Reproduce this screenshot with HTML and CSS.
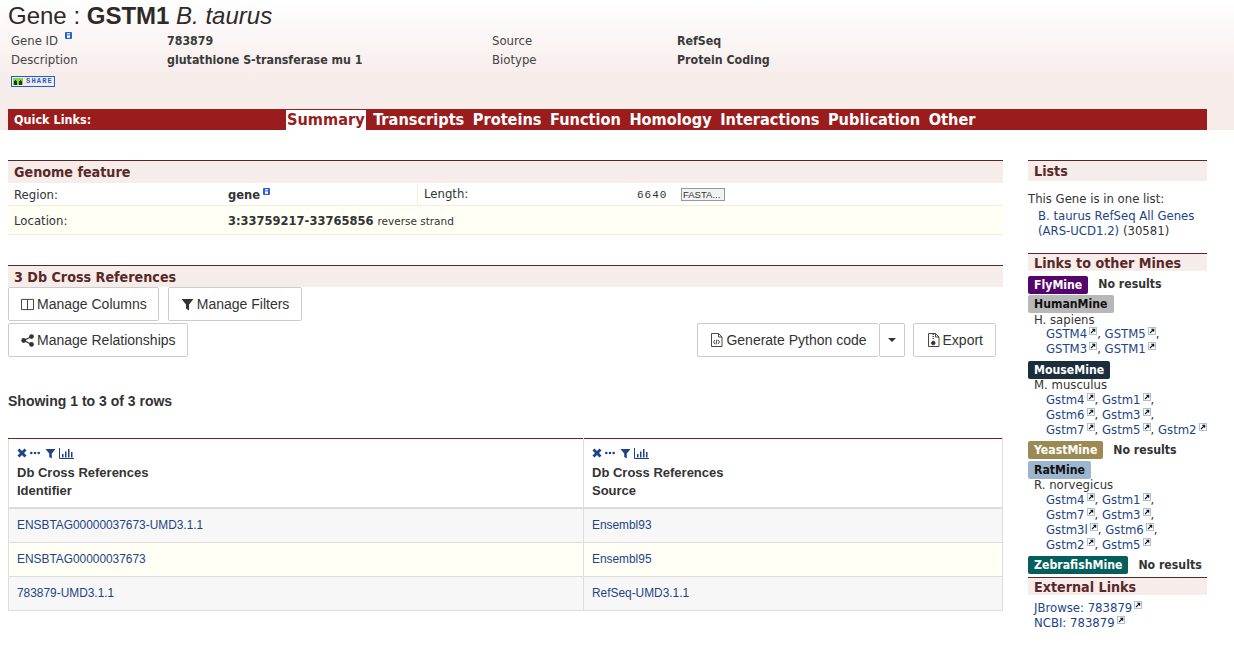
FILE: index.html
```html
<!DOCTYPE html>
<html lang="en">
<head>
  <meta charset="UTF-8">
  <title>Gene : GSTM1 B. taurus</title>
  <link rel="stylesheet" href="styles.css">
</head>
<body>

  <svg class="icon-defs" width="0" height="0">
    <symbol id="ext" viewBox="0 0 8 8">
      <rect x="0.5" y="0.5" width="7" height="7" fill="#fff" stroke="#a9c0d6"/>
      <path d="M2 6 5.200 2.800M3.200 2.300H5.700V4.800" fill="none" stroke="#111" stroke-width="1.100"/>
    </symbol>
    <symbol id="info" viewBox="0 0 7 7">
      <rect width="7" height="7" rx="1" fill="#2a62c9"/>
      <rect x="2" y="1.200" width="3" height="1.200" fill="#fff"/>
      <rect x="2" y="3.400" width="3" height="2.400" fill="#fff"/>
    </symbol>
    <symbol id="filter" viewBox="0 0 12 12">
      <path d="M0.500 1H11.500L7.400 6V11.500L4.600 9.800V6Z"/>
    </symbol>
  </svg>

  <header class="gene-header">
    <h1 class="gene-title">Gene : <b>GSTM1</b> <i>B. taurus</i></h1>
    <div class="gene-facts">
      <span class="fact-label">Gene ID <svg class="info-icon"><use href="#info"/></svg></span>
      <strong>783879</strong>
      <span class="fact-label">Source</span>
      <strong>RefSeq</strong>
      <span class="fact-label">Description</span>
      <strong>glutathione S-transferase mu 1</strong>
      <span class="fact-label">Biotype</span>
      <strong>Protein Coding</strong>
    </div>
    <div class="share-badge">
      <svg class="share-logo" viewBox="0 0 10 7"><rect width="10" height="7" fill="#86d936"/><path d="M1 7V3H2V2H3V3H4V7ZM6 7V3H7V2H8V3H9V7Z" fill="#1d3a1d"/></svg>
      <span>SHARE</span>
    </div>

    <nav class="quick-links">
      <span class="quick-title">Quick Links:</span>
      <div class="quick-menu">
        <a class="active">Summary</a>
        <a>Transcripts</a>
        <a>Proteins</a>
        <a>Function</a>
        <a>Homology</a>
        <a>Interactions</a>
        <a>Publication</a>
        <a>Other</a>
      </div>
    </nav>
  </header>

  <div class="page">
    <main class="main-col">
      <section class="feature">
        <h2 class="sec-title">Genome feature</h2>
        <div class="feature-row">
          <span class="feat-label">Region:</span>
          <span class="feat-value"><strong>gene</strong> <svg class="info-icon"><use href="#info"/></svg></span>
          <span class="feat-label feat-len">Length:</span>
          <span class="feat-num">6640</span>
          <span class="fasta-btn">FASTA...</span>
        </div>
        <div class="feature-row loc">
          <span class="feat-label">Location:</span>
          <span class="feat-value"><strong>3:33759217-33765856</strong> <small>reverse strand</small></span>
        </div>
      </section>

      <section class="refs">
        <h2 class="sec-title">3 Db Cross References</h2>
        <div class="toolbar">
          <button class="btn btn-left">
            <svg class="btn-icon" viewBox="0 0 14 14"><path d="M0.500 1.500H13.500V12.500H0.500ZM7 1.500V12.500" fill="none" stroke="#333"/></svg>
            Manage Columns
          </button>
          <button class="btn btn-left">
            <svg class="btn-icon" viewBox="0 0 12 12" fill="#333"><use href="#filter"/></svg>
            Manage Filters
          </button>
        </div>
        <div class="toolbar toolbar-2">
          <button class="btn btn-left">
            <svg class="btn-icon" viewBox="0 0 12 12" fill="#333"><path d="M2.500 6 9.500 2.500M2.500 6 9.500 9.500" stroke="#333" stroke-width="1.200"/><circle cx="2.500" cy="6" r="2.200"/><circle cx="9.700" cy="2.400" r="2.200"/><circle cx="9.700" cy="9.600" r="2.200"/></svg>
            Manage Relationships
          </button>
          <div class="toolbar-right">
            <div class="btn-group">
              <button class="btn">
                <svg class="btn-icon doc-icon" viewBox="0 0 12 14" fill="none" stroke="#333" stroke-width="0.900"><path d="M1 .5H8L11.500 4V13.500H1ZM8 .5V4H11.500"/><path d="M4.500 7 3 9 4.500 11M7.500 7 9 9 7.500 11M6.500 6.500 5.500 11.500"/></svg>
                Generate Python code
              </button>
              <button class="btn caret-btn"><span class="caret"></span></button>
            </div>
            <button class="btn btn-export">
              <svg class="btn-icon doc-icon" viewBox="0 0 12 14" fill="none" stroke="#333" stroke-width="0.900"><path d="M1 .5H8L11.500 4V13.500H1ZM8 .5V4H11.500"/><path d="M5 1.500H6.500M5 3.500H6.500M5 5.500H6.500"/><circle cx="5.800" cy="10" r="1.800" fill="#333"/></svg>
              Export
            </button>
          </div>
        </div>

        <p class="row-count">Showing 1 to 3 of 3 rows</p>

        <table class="ref-table">
          <thead>
            <tr>
              <th>
                <div class="col-tools">
                  <svg viewBox="0 0 10 10"><path d="M.5 2.500 2.500 .5 5 3 7.500 .5 9.500 2.500 7 5 9.500 7.500 7.500 9.500 5 7 2.500 9.500 .5 7.500 3 5Z"/></svg>
                  <svg viewBox="0 0 10 10"><circle cx="1.300" cy="5" r="1.300"/><circle cx="5" cy="5" r="1.300"/><circle cx="8.700" cy="5" r="1.300"/></svg>
                  <svg class="tool-filter" viewBox="0 0 12 12"><use href="#filter"/></svg>
                  <svg class="tool-wide" viewBox="0 0 15 11"><path d="M.5 0V10.500H15" fill="none" stroke="#1e4480"/><path d="M3 6H4.500V9.500H3ZM6 3.500H7.500V9.500H6ZM9 1H10.500V9.500H9ZM12 4H13.500V9.500H12Z"/></svg>
                </div>
                Db Cross References<br>Identifier
              </th>
              <th>
                <div class="col-tools">
                  <svg viewBox="0 0 10 10"><path d="M.5 2.500 2.500 .5 5 3 7.500 .5 9.500 2.500 7 5 9.500 7.500 7.500 9.500 5 7 2.500 9.500 .5 7.500 3 5Z"/></svg>
                  <svg viewBox="0 0 10 10"><circle cx="1.300" cy="5" r="1.300"/><circle cx="5" cy="5" r="1.300"/><circle cx="8.700" cy="5" r="1.300"/></svg>
                  <svg class="tool-filter" viewBox="0 0 12 12"><use href="#filter"/></svg>
                  <svg class="tool-wide" viewBox="0 0 15 11"><path d="M.5 0V10.500H15" fill="none" stroke="#1e4480"/><path d="M3 6H4.500V9.500H3ZM6 3.500H7.500V9.500H6ZM9 1H10.500V9.500H9ZM12 4H13.500V9.500H12Z"/></svg>
                </div>
                Db Cross References<br>Source
              </th>
            </tr>
          </thead>
          <tbody>
            <tr><td><a>ENSBTAG00000037673-UMD3.1.1</a></td><td><a>Ensembl93</a></td></tr>
            <tr class="odd"><td><a>ENSBTAG00000037673</a></td><td><a>Ensembl95</a></td></tr>
            <tr><td><a>783879-UMD3.1.1</a></td><td><a>RefSeq-UMD3.1.1</a></td></tr>
          </tbody>
        </table>
      </section>
    </main>

    <aside class="side-col">
      <h3 class="side-title">Lists</h3>
      <p class="list-intro">This Gene is in one list:</p>
      <p class="list-link"><a>B. taurus RefSeq All Genes</a><br><a>(ARS-UCD1.2)</a> (30581)</p>

      <h3 class="side-title mines-title">Links to other Mines</h3>

      <div class="mine"><span class="mine-tag fly">FlyMine</span><b>No results</b></div>
      <div class="mine"><span class="mine-tag human">HumanMine</span></div>
      <div class="organism">H. sapiens</div>
      <div class="orthologs">
        <a>GSTM4</a><svg class="ext"><use href="#ext"/></svg>, <a>GSTM5</a><svg class="ext"><use href="#ext"/></svg>,<br>
        <a>GSTM3</a><svg class="ext"><use href="#ext"/></svg>, <a>GSTM1</a><svg class="ext"><use href="#ext"/></svg>
      </div>

      <div class="mine"><span class="mine-tag mouse">MouseMine</span></div>
      <div class="organism">M. musculus</div>
      <div class="orthologs">
        <a>Gstm4</a><svg class="ext"><use href="#ext"/></svg>, <a>Gstm1</a><svg class="ext"><use href="#ext"/></svg>,<br>
        <a>Gstm6</a><svg class="ext"><use href="#ext"/></svg>, <a>Gstm3</a><svg class="ext"><use href="#ext"/></svg>,<br>
        <a>Gstm7</a><svg class="ext"><use href="#ext"/></svg>, <a>Gstm5</a><svg class="ext"><use href="#ext"/></svg>, <a>Gstm2</a><svg class="ext"><use href="#ext"/></svg>
      </div>

      <div class="mine"><span class="mine-tag yeast">YeastMine</span><b>No results</b></div>
      <div class="mine"><span class="mine-tag rat">RatMine</span></div>
      <div class="organism">R. norvegicus</div>
      <div class="orthologs">
        <a>Gstm4</a><svg class="ext"><use href="#ext"/></svg>, <a>Gstm1</a><svg class="ext"><use href="#ext"/></svg>,<br>
        <a>Gstm7</a><svg class="ext"><use href="#ext"/></svg>, <a>Gstm3</a><svg class="ext"><use href="#ext"/></svg>,<br>
        <a>Gstm3l</a><svg class="ext"><use href="#ext"/></svg>, <a>Gstm6</a><svg class="ext"><use href="#ext"/></svg>,<br>
        <a>Gstm2</a><svg class="ext"><use href="#ext"/></svg>, <a>Gstm5</a><svg class="ext"><use href="#ext"/></svg>
      </div>

      <div class="mine"><span class="mine-tag zebra">ZebrafishMine</span><b>No results</b></div>

      <h3 class="side-title ext-title">External Links</h3>
      <div class="ext-links">
        <a>JBrowse: 783879</a><svg class="ext"><use href="#ext"/></svg><br>
        <a>NCBI: 783879</a><svg class="ext"><use href="#ext"/></svg>
      </div>
    </aside>
  </div>

</body>
</html>
```

FILE: styles.css
```css
:root {
  --maroon: #9b1c1c;
  --title: #5a2828;
  --tint: #f6ecea;
  --link: #1c4487;
  --text: #333;
  --narrow: "DejaVu Sans Condensed", "DejaVu Sans", sans-serif;
}
*, *::before, *::after { box-sizing: border-box; margin: 0; padding: 0; }
body {
  font-family: "DejaVu Sans", sans-serif;
  font-size: 11.7px;
  color: var(--text);
  background: #fff;
  overflow: hidden;
}
.icon-defs { position: absolute; }
.info-icon { width: 7px; height: 7px; vertical-align: 6px; margin-left: 3px; }

/* header */
.gene-header {
  height: 130px;
  padding: 0 8px;
  background: linear-gradient(#fff, var(--tint) 80px);
}
.gene-title {
  font-family: "Liberation Sans", Arial, sans-serif;
  font-size: 24px;
  font-weight: 400;
  line-height: 32px;
  color: #2f2a28;
}
.gene-facts {
  display: grid;
  grid-template-columns: 156px 325px 185px 1fr;
  padding-left: 3px;
  line-height: 19px;
}
.gene-facts strong { font-family: var(--narrow); font-size: 12.300px; font-weight: 700; color: #3a3a3a; }
.fact-label { color: #444; }
.share-badge {
  display: flex;
  align-items: center;
  gap: 3px;
  width: 44px;
  height: 11px;
  margin: 6px 0 0 3px;
  border: 1px solid #1a5fd0;
  padding: 0 1px;
  font-family: "Liberation Mono", monospace;
  font-size: 7px;
  font-weight: 700;
  letter-spacing: 1.200px;
  color: #1a5fd0;
  line-height: 9px;
}
.share-logo { width: 10px; height: 7px; flex: none; }

/* quick links */
.quick-links {
  display: flex;
  width: 1199px;
  height: 21px;
  margin-top: 22px;
  background: var(--maroon);
  color: #fff;
  font-weight: 700;
}
.quick-title { width: 278px; padding-left: 6px; font-family: var(--narrow); font-size: 12.500px; line-height: 21px; }
.quick-menu {
  display: flex;
  gap: 6.500px;
  font-family: var(--narrow);
  font-size: 16.200px;
  line-height: 21px;
}
.quick-menu a { padding: 0 1px; }
.quick-menu .active {
  height: 20px;
  margin-top: 1px;
  line-height: 19px;
  background: #fff;
  color: var(--maroon);
}

/* columns */
.page { display: flex; padding: 30px 0 0 8px; }
.main-col { width: 995px; }
.side-col { width: 179px; margin-left: 25px; line-height: 15px; }

.sec-title {
  height: 23px;
  padding-left: 6px;
  border-top: 1px solid var(--title);
  background: var(--tint);
  color: var(--title);
  font-family: var(--narrow);
  font-size: 14.200px;
  line-height: 22px;
}

/* genome feature */
.feature-row {
  display: flex;
  align-items: center;
  height: 22px;
  padding: 1px 0 0 6px;
}
.feature-row.loc {
  height: 30px;
  padding-top: 2px;
  background: #fffff6;
  border-top: 1px solid #f3f0d8;
  border-bottom: 1px solid #f3f0d8;
}
.feat-label { width: 214px; }
.feat-value { width: 189px; height: 100%; display: flex; align-items: center; white-space: nowrap; }
.feat-value strong { font-size: 11.500px; }
.feat-value small { font-size: 10.500px; margin-left: 4px; }
.feat-value .info-icon { align-self: flex-start; margin-top: 4px; }
.feat-len { width: 220px; height: 100%; line-height: 21px; border-left: 1px solid #f3f0d8; padding-left: 6px; }
.feat-num { width: 44px; font-family: "Liberation Mono", monospace; font-size: 11px; letter-spacing: 1px; }
.fasta-btn {
  width: 44px;
  height: 13px;
  padding: 0 1px;
  border: 1px solid #999;
  background: #f2f2f2;
  font-family: "Liberation Sans", Arial, sans-serif;
  font-size: 9.500px;
  line-height: 11px;
}

/* cross references */
.refs { margin-top: 30px; }
.refs .sec-title { height: 22px; line-height: 22px; }
.toolbar { display: flex; gap: 8.500px; }
.toolbar-2 { margin-top: 2px; justify-content: space-between; padding-right: 7px; }
.toolbar-right { display: flex; gap: 8px; }
.btn-group { display: flex; }
.btn {
  display: flex;
  align-items: center;
  gap: 3px;
  height: 34px;
  padding: 0 12px;
  border: 1px solid #ccc;
  border-radius: 2px;
  background: #fff;
  color: #333;
  font-family: "Liberation Sans", Arial, sans-serif;
  font-size: 14px;
}
.btn-left { padding-right: 11.500px; }
.btn-export { padding-left: 13px; }
.btn-icon { width: 13px; height: 13px; }
.doc-icon { height: 14px; }
.btn-group .btn:first-child { border-right: 0; }
.caret-btn { width: 26px; padding: 0; justify-content: center; }
.caret { border: 4px solid transparent; border-top-color: #333; border-bottom: 0; }
.row-count {
  margin-top: 36px;
  font-family: "Liberation Sans", Arial, sans-serif;
  font-size: 14px;
  font-weight: 700;
  line-height: 16px;
}
.ref-table {
  width: 995px;
  margin-top: 29px;
  border-collapse: collapse;
  font-family: "Liberation Sans", Arial, sans-serif;
  font-size: 11.900px;
}
.ref-table th {
  width: 575px;
  padding: 7px 8px;
  border: 1px solid #ddd;
  border-top: 1px solid #6d2222;
  border-bottom: 2px solid #ddd;
  text-align: left;
  font-size: 13px;
  line-height: 18px;
  vertical-align: top;
}
.ref-table th + th { width: auto; }
.col-tools { display: flex; align-items: center; gap: 3px; height: 14px; margin-bottom: 4px; fill: var(--link); }
.col-tools svg { width: 10px; height: 10px; }
.col-tools .tool-filter { width: 11px; height: 11px; margin-left: 2px; }
.col-tools .tool-wide { width: 15px; height: 11px; }
.ref-table td { height: 34px; padding: 0 8px; border: 1px solid #ddd; background: #f7f7f7; }
.ref-table .odd td { background: #fffff6; }
.ref-table a { color: var(--link); }

/* sidebar */
.side-title {
  height: 21px;
  padding-left: 6px;
  border-top: 1px solid var(--title);
  background: var(--tint);
  color: var(--title);
  font-family: var(--narrow);
  font-size: 14.200px;
  line-height: 20px;
}
.list-intro { margin-top: 11px; margin-bottom: 2px; }
.list-link { padding-left: 10px; }
.side-col a { color: var(--link); }
.mines-title { height: 18px; margin-top: 14px; margin-bottom: 4px; line-height: 18px; }
.mine { display: flex; align-items: center; height: 19.500px; font-family: var(--narrow); font-size: 12.200px; }
.mine b { margin-left: 10px; white-space: nowrap; }
.mine-tag {
  height: 18px;
  padding: 0 6px;
  border-radius: 2px;
  font-weight: 700;
  line-height: 18px;
}
.fly { background: #54066d; color: #fff; }
.human { background: #b8b8b8; color: #111; }
.mouse { background: #1c2e3c; color: #fff; }
.yeast { background: #9c8a54; color: #fff; }
.rat { background: #9cb6d0; color: #111; }
.zebra { background: #045f5c; color: #fff; }
.organism { margin: -0.500px 0 0.500px; padding-left: 6px; line-height: 13px; }
.orthologs { margin-bottom: 3px; padding-left: 18px; line-height: 15px; }
.ext { width: 8px; height: 8px; margin-left: 2px; vertical-align: top; }
.ext-title { height: 18px; margin-top: 2px; line-height: 18px; }
.ext-links { margin-top: 6px; padding-left: 6px; }
```
